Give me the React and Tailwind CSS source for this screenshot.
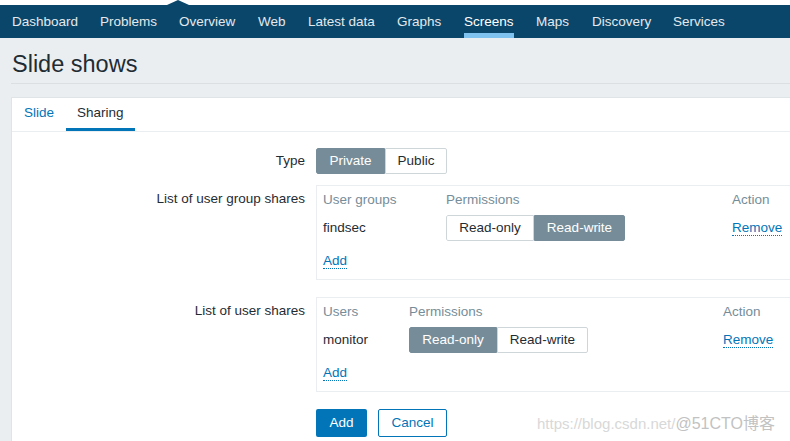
import React from "react";

const navItems = [
  { label: "Dashboard", w: "w-[88px]" },
  { label: "Problems", w: "w-[79px]" },
  { label: "Overview", w: "w-[79px]" },
  { label: "Web", w: "w-[50px]" },
  { label: "Latest data", w: "w-[89px]" },
  { label: "Graphs", w: "w-[67px]" },
  { label: "Screens", w: "w-[72px]", active: true },
  { label: "Maps", w: "w-[56px]" },
  { label: "Discovery", w: "w-[81px]" },
  { label: "Services", w: "w-[90px]" },
];

function Segmented({ options, active }) {
  return (
    <div className="flex h-[26px] rounded-[2px] overflow-hidden">
      {options.map((o, i) => {
        const on = o.label === active;
        return (
          <div
            key={o.label}
            className={
              `${o.w} flex items-center justify-center border pt-[1px] ` +
              (on
                ? "bg-[#768d99] border-[#768d99] text-white"
                : "bg-white border-[#cfd6da] text-[#1f2c33]") +
              (i === 0 ? " rounded-l-[2px]" : " rounded-r-[2px]")
            }
          >
            {o.label}
          </div>
        );
      })}
    </div>
  );
}

function LinkText({ children }) {
  return (
    <span className="text-[#0275b8] border-b border-dotted border-[#0275b8] leading-[15px]">
      {children}
    </span>
  );
}

function ShareBox({ first, name, col1, col2, active }) {
  return (
    <div className="w-[540px] border border-[#ebeef0] px-[6px] pb-[5px]">
      <div className="flex h-[28px] items-center pt-[1px] text-[#768d99]">
        <div className={col1}>{first}</div>
        <div className={col2}>Permissions</div>
        <div>Action</div>
      </div>
      <div className="flex h-[28px] items-center">
        <div className={`${col1} pt-[1px]`}>{name}</div>
        <div className={col2}>
          <Segmented
            active={active}
            options={[
              { label: "Read-only", w: "w-[88px]" },
              { label: "Read-write", w: "w-[91px]" },
            ]}
          />
        </div>
        <div className="pt-[1px]">
          <LinkText>Remove</LinkText>
        </div>
      </div>
      <div className="flex h-[28px] items-center mt-[4px] pt-[1px]">
        <LinkText>Add</LinkText>
      </div>
    </div>
  );
}

export default function App() {
  return (
    <div
      className="relative w-[790px] h-[441px] overflow-hidden bg-[#ebeef0] text-[13.5px] text-[#1f2c33]"
      style={{ fontFamily: '"Liberation Sans", Arial, sans-serif' }}
    >
      {/* top strip with caret */}
      <div className="relative h-[5px] bg-white">
        <div className="absolute left-[167px] top-0 w-0 h-0 border-x-[11px] border-x-transparent border-b-[5px] border-b-[#0a466a]" />
      </div>

      {/* main nav */}
      <div className="flex h-[33px] bg-[#0a466a] pl-[12px]">
        {navItems.map((n) => (
          <div key={n.label} className={`${n.w} shrink-0 h-full flex`}>
            <span
              className={
                "h-full flex items-center border-t-[6px] border-b-[5px] border-t-transparent whitespace-nowrap " +
                (n.active
                  ? "border-b-[#7fc2f0] text-white"
                  : "border-b-transparent text-[#e4e9ec]")
              }
            >
              {n.label}
            </span>
          </div>
        ))}
      </div>

      {/* page header */}
      <div className="ml-[11px] h-[46px] border-b border-[#dcdfe2] pt-[12px]">
        <h1 className="pl-[1px] text-[23.5px] leading-[28px] text-[#1f2c33]">Slide shows</h1>
      </div>

      {/* panel */}
      <div className="ml-[11px] mt-[13px] h-[400px] bg-white border border-[#dfe4e7] border-r-0">
        <div className="flex border-b border-[#ebeef0] h-[34px]">
          <div className="h-[33px] px-[12px] pt-[1px] flex items-center border-b-[3px] border-transparent text-[#0275b8]">
            Slide
          </div>
          <div className="h-[33px] pl-[11px] pr-[11px] pt-[1px] flex items-center border-b-[3px] border-[#0275b8]">
            Sharing
          </div>
        </div>

        <div className="pt-[16px] grid grid-cols-[293px_1fr] gap-x-[11px]">
          <div className="text-right h-[26px] pt-[1px] flex items-center justify-end">Type</div>
          <div>
            <Segmented
              active="Private"
              options={[
                { label: "Private", w: "w-[69px]" },
                { label: "Public", w: "w-[62px]" },
              ]}
            />
          </div>

          <div className="text-right mt-[11px] pt-[4px]">List of user group shares</div>
          <div className="mt-[11px]">
            <ShareBox
              first="User groups"
              name="findsec"
              col1="w-[123px]"
              col2="w-[286px]"
              active="Read-write"
            />
          </div>

          <div className="text-right mt-[17px] pt-[4px]">List of user shares</div>
          <div className="mt-[17px]">
            <ShareBox
              first="Users"
              name="monitor"
              col1="w-[86px]"
              col2="w-[314px]"
              active="Read-only"
            />
          </div>

          <div />
          <div className="mt-[17px] flex gap-[11px]">
            <div className="w-[51px] h-[28px] pt-[1px] rounded-[2px] bg-[#0275b8] text-white flex items-center justify-center">
              Add
            </div>
            <div className="w-[69px] h-[28px] pt-[1px] rounded-[2px] border border-[#0275b8] text-[#0275b8] flex items-center justify-center">
              Cancel
            </div>
          </div>
        </div>
      </div>

      {/* watermark */}
      <div className="absolute left-[537px] top-[412px] text-[15px] whitespace-nowrap">
        <span className="text-[#d8d8d8]">https://blog.csdn.net/</span>
        <span className="text-[#c2c2c2] text-[16px]" style={{ fontFamily: '"Liberation Sans", "Noto Sans CJK SC", sans-serif' }}>
          @51CTO博客
        </span>
      </div>
    </div>
  );
}
